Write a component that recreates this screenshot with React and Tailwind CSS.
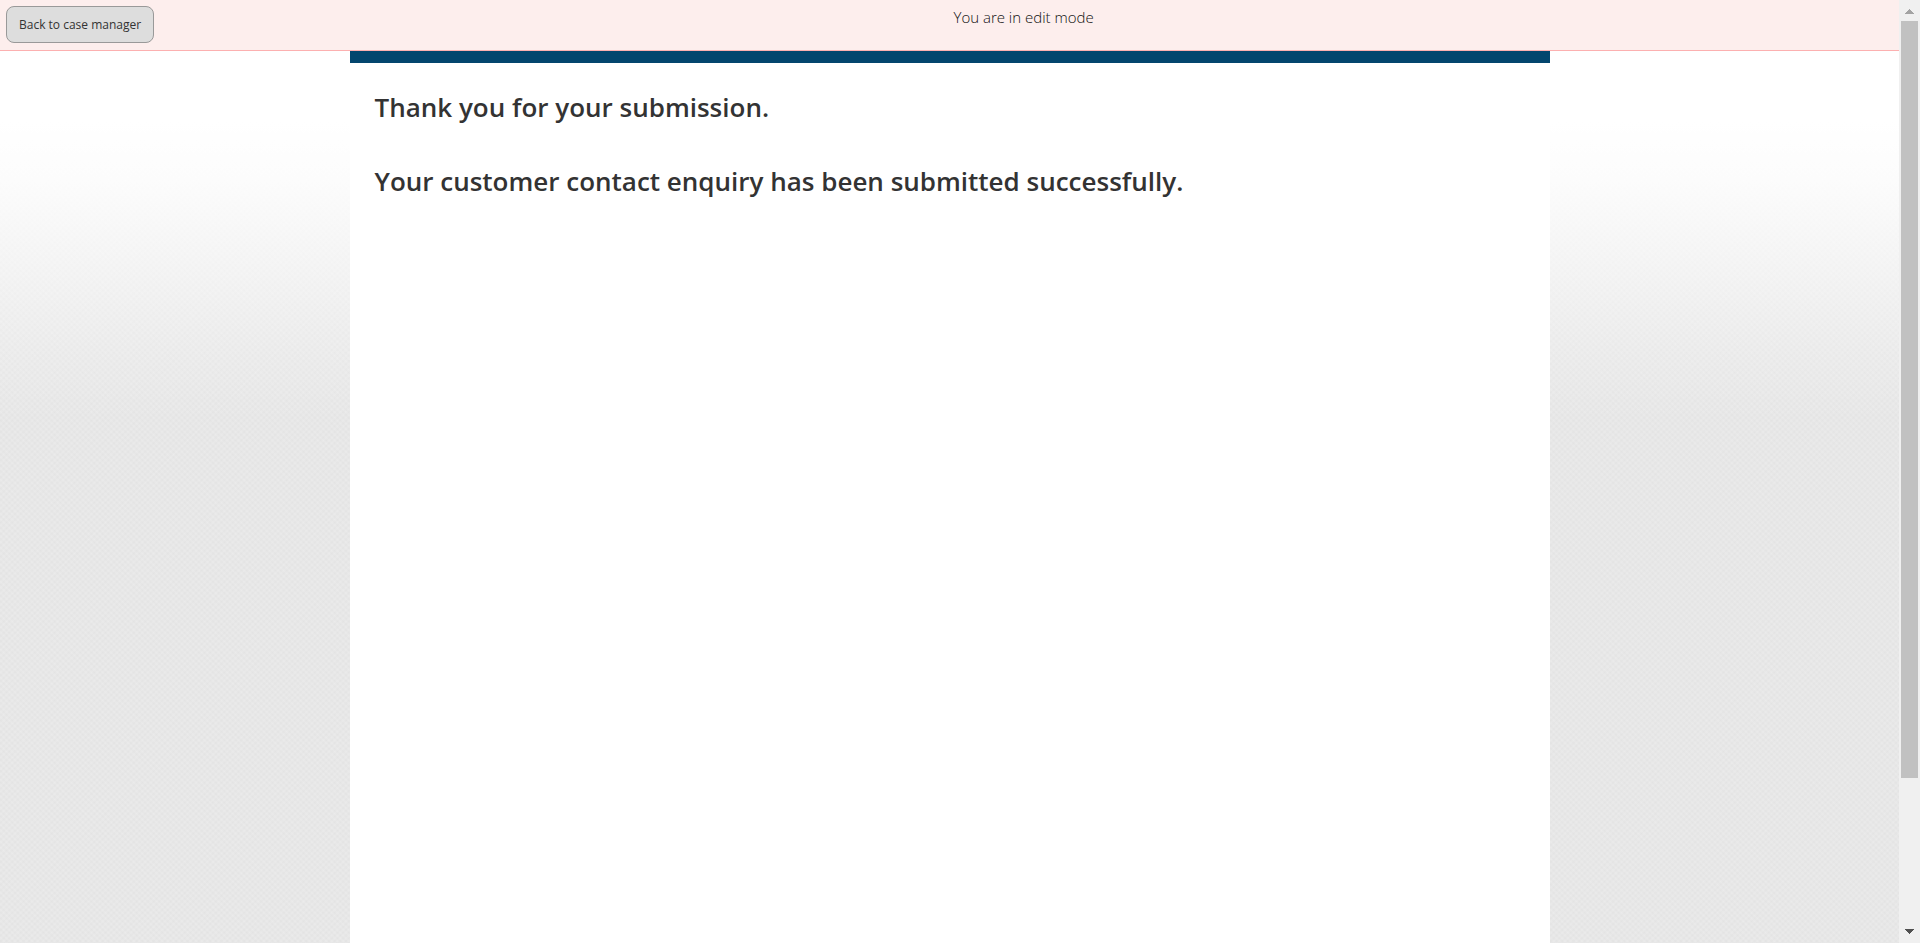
function EditBanner() {
  return (
    <header className="flex h-[51px] shrink-0 border-b border-[#fcb0b0] bg-[#fdeeed] px-1.5 pt-1.5 text-[#333]">
      <button
        type="button"
        className="h-[37px] shrink-0 rounded-lg border border-[#999] bg-[#ddd] px-3 font-['Open_Sans',sans-serif] text-[12px] font-normal"
      >
        Back to case manager
      </button>
      <p className="grow text-center font-['Open_Sans',sans-serif] text-[15px] leading-[22px] font-light text-[#111]">
        You are in edit mode
      </p>
    </header>
  );
}

function ScrollRail() {
  return (
    <div aria-hidden="true" className="flex w-[21px] shrink-0 flex-col items-center bg-[#f0f0f0]">
      <div className="flex h-[21px] shrink-0 items-center justify-center pt-0.5">
        <svg width="9" height="5" viewBox="0 0 9 5" shapeRendering="crispEdges">
          <path d="M0 5V4H1V3H2V2H3V1H4V0H5V1H6V2H7V3H8V4H9V5Z" fill="#a3a3a3" />
        </svg>
      </div>
      <div className="flex w-[17px] grow flex-col">
        <div className="h-[84%] bg-[#c1c1c1]" />
      </div>
      <div className="flex h-[21px] shrink-0 items-center justify-center pb-0.5">
        <svg width="9" height="5" viewBox="0 0 9 5" shapeRendering="crispEdges">
          <path d="M0 0V1H1V2H2V3H3V4H4V5H5V4H6V3H7V2H8V1H9V0Z" fill="#505050" />
        </svg>
      </div>
    </div>
  );
}

export default function App() {
  return (
    <div className="flex min-h-screen bg-white">
      <div className="flex min-w-0 grow flex-col">
        <EditBanner />
        <div className="flex grow justify-center bg-[linear-gradient(to_bottom,#fff_0px,#fff_70px,rgba(255,255,255,0.88)_130px,rgba(255,255,255,0.6)_200px,rgba(255,255,255,0.4)_250px,rgba(255,255,255,0.2)_300px,rgba(255,255,255,0)_370px),repeating-linear-gradient(45deg,rgba(255,255,255,0.16)_0px,rgba(255,255,255,0)_2px,rgba(255,255,255,0.16)_4px),repeating-linear-gradient(135deg,rgba(255,255,255,0.16)_0px,rgba(255,255,255,0)_2px,rgba(255,255,255,0.16)_4px),linear-gradient(#e3e3e3,#e3e3e3)]">
          <main className="w-full max-w-[1200px] border-t-[12px] border-[#03466e] bg-white px-[25px] pt-[26px] font-['Open_Sans',sans-serif] text-[26px] leading-[37px] font-semibold text-[#333]">
            <h1>Thank you for your submission.</h1>
            <h2 className="mt-[37px]">Your customer contact enquiry has been submitted successfully.</h2>
          </main>
        </div>
      </div>
      <ScrollRail />
    </div>
  );
}
